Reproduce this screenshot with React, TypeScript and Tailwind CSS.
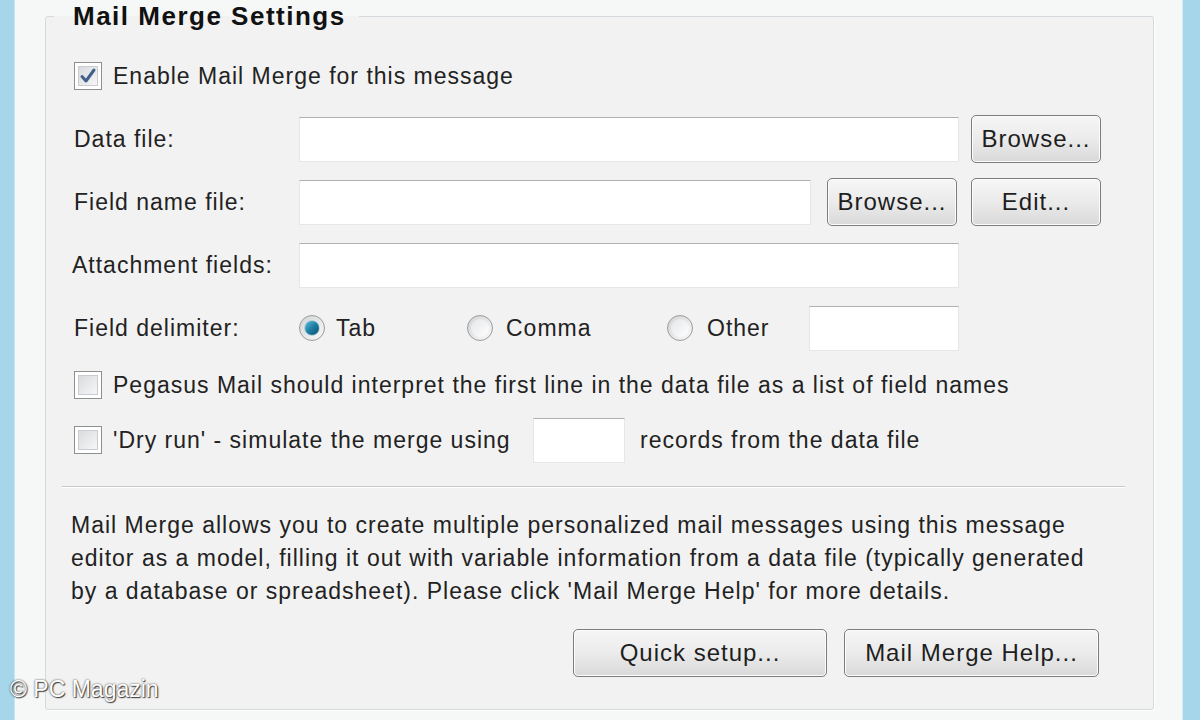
import React from "react";

const font = { fontFamily: '"Liberation Sans", Arial, sans-serif' };

function CheckBox({ checked }: { checked?: boolean }) {
    return (
        <div className="w-[28px] h-[28px] shrink-0 border border-[#8e8f8f] bg-white p-[3px]">
            <div className="w-full h-full border border-[#c9cdd2] bg-gradient-to-br from-[#d9dcdf] to-[#f6f6f6] flex items-center justify-center">
                {checked && (
                    <svg width="18" height="18" viewBox="0 0 18 18">
                        <path d="M3 9.5 L7 14 L15 3" fill="none" stroke="#44608a" strokeWidth="3" strokeLinecap="round" strokeLinejoin="round" />
                    </svg>
                )}
            </div>
        </div>
    );
}

function Radio({ checked }: { checked?: boolean }) {
    return (
        <div className="w-[26px] h-[26px] shrink-0 rounded-full border border-[#9a9a9a] bg-gradient-to-br from-[#d2d4d6] to-[#fafafa] flex items-center justify-center">
            <div className="w-[18px] h-[18px] rounded-full bg-gradient-to-br from-[#e4e6e8] to-[#ffffff] flex items-center justify-center">
                {checked && <div className="w-[14px] h-[14px] rounded-full bg-gradient-to-br from-[#5cc0dc] via-[#1c7ea3] to-[#0d4f6e] shadow-[0_0_2px_#1a6f90]" />}
            </div>
        </div>
    );
}

function TextBox({ w }: { w: string }) {
    return <div className={`${w} h-[45px] shrink-0 bg-white border border-[#e3e7ea] border-t-[#adb0b4]`} />;
}

function Button({ w, children }: { w: string; children: React.ReactNode }) {
    return (
        <div className={`${w} h-[48px] shrink-0 rounded-[5px] border border-[#7d7d7d] bg-gradient-to-b from-[#f6f6f6] via-[#ebebeb] to-[#d9d9d9] shadow-[inset_0_0_0_1px_#fcfcfc] flex items-center justify-center text-[24px] text-[#1e1e1e]`}>
            {children}
        </div>
    );
}

export default function App() {
    return (
        <div className="relative w-[1200px] h-[720px] flex overflow-hidden bg-[#f6f7f7] text-[#222] text-[23px] tracking-[1px]" style={font}>
            <div className="w-[15px] h-full bg-[#a6d6ea] border-r border-[#c4e5f2]" />
            <div className="flex-1 pl-[30px] pr-[28px]">
                <fieldset className="h-[710px] border border-[#d3d9dd] rounded-[3px] bg-[#f2f2f2] shadow-[1px_1px_0_#ffffff] pl-[28px] pr-[50px]">
                    <legend className="-ml-[20px] pl-[19px] pr-[13px] text-[26px] tracking-[1.5px] font-bold leading-[32px] text-[#111]">Mail Merge Settings</legend>

                    <div className="flex items-center gap-[11px] h-[34px] mt-[27px]">
                        <CheckBox checked />
                        <span>Enable Mail Merge for this message</span>
                    </div>

                    <div className="flex items-center h-[48px] mt-[22px]">
                        <span className="w-[225px] shrink-0">Data file:</span>
                        <TextBox w="w-[660px]" />
                        <div className="ml-[12px]"><Button w="w-[130px]">Browse...</Button></div>
                    </div>

                    <div className="flex items-center h-[48px] mt-[15px]">
                        <span className="w-[225px] shrink-0">Field name file:</span>
                        <TextBox w="w-[512px]" />
                        <div className="ml-[16px]"><Button w="w-[130px]">Browse...</Button></div>
                        <div className="ml-[14px]"><Button w="w-[130px]">Edit...</Button></div>
                    </div>

                    <div className="flex items-center h-[48px] mt-[15px]">
                        <span className="w-[225px] shrink-0 -ml-[2px]">Attachment fields:</span>
                        <div className="ml-[2px]"><TextBox w="w-[660px]" /></div>
                    </div>

                    <div className="flex items-center h-[48px] mt-[15px]">
                        <span className="w-[225px] shrink-0">Field delimiter:</span>
                        <div className="flex items-center gap-[11px] w-[168px]">
                            <Radio checked />
                            <span>Tab</span>
                        </div>
                        <div className="flex items-center gap-[13px] w-[200px]">
                            <Radio />
                            <span>Comma</span>
                        </div>
                        <div className="flex items-center gap-[14px] w-[142px]">
                            <Radio />
                            <span>Other</span>
                        </div>
                        <TextBox w="w-[150px]" />
                    </div>

                    <div className="flex items-center gap-[11px] h-[48px] mt-[9px]">
                        <CheckBox />
                        <span>Pegasus Mail should interpret the first line in the data file as a list of field names</span>
                    </div>

                    <div className="flex items-center h-[48px] mt-[7px]">
                        <CheckBox />
                        <span className="ml-[11px] w-[420px] shrink-0">'Dry run' - simulate the merge using</span>
                        <TextBox w="w-[92px]" />
                        <span className="ml-[15px]">records from the data file</span>
                    </div>

                    <div className="mt-[22px] -ml-[12px] -mr-[22px] border-t border-[#c9c9c9] shadow-[0_1px_0_#ffffff]" />

                    <p className="mt-[22px] -ml-[3px] leading-[33px] whitespace-nowrap">
                        Mail Merge allows you to create multiple personalized mail messages using this message<br />
                        editor as a model, filling it out with variable information from a data file (typically generated<br />
                        by a database or spreadsheet). Please click 'Mail Merge Help' for more details.
                    </p>

                    <div className="flex justify-end gap-[17px] mt-[21px] pr-[4px]">
                        <Button w="w-[254px]">Quick setup...</Button>
                        <Button w="w-[255px]">Mail Merge Help...</Button>
                    </div>
                </fieldset>
            </div>
            <div className="w-[18px] h-full bg-[#a6d6ea] border-l border-[#d2ecf6]" />

            <div className="absolute left-[10px] bottom-[14px] text-[23px] tracking-normal text-white [text-shadow:0_0_2px_#333,1px_1px_1px_#444]">© PC Magazin</div>
        </div>
    );
}
